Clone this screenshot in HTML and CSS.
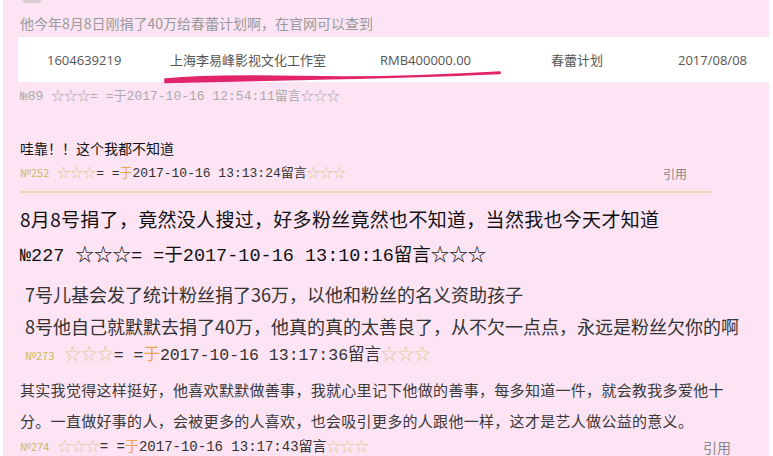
FILE: index.html
```html
<!DOCTYPE html>
<html lang="zh-CN">
<head>
  <meta charset="UTF-8" />
  <title>留言</title>
  <link rel="stylesheet" href="styles.css">
</head>
<body>

<div class="page">
  <!-- 上一条的头像，被截掉了 -->
  <div class="avatar-cut"></div>

  <p class="quote">他今年8月8日刚捐了40万给春蕾计划啊，在官网可以查到</p>

  <div class="donation">
    <span class="cell c-id">1604639219</span>
    <span class="cell c-name">上海李易峰影视文化工作室</span>
    <span class="cell c-amt">RMB400000.00</span>
    <span class="cell c-plan">春蕾计划</span>
    <span class="cell c-date">2017/08/08</span>
    <svg class="mark" width="773" height="50" viewBox="0 0 773 50">
      <path d="M165 44 Q 210 39.5 300 41.5 T 500 37 L 500 38.5 Q 420 42 300 44.5 T 165 47.5 Z" fill="#e2246a" stroke="#e2246a" stroke-width="1.5" stroke-linejoin="round"/>
    </svg>
  </div>

  <p class="meta meta-grey">№89 ☆☆☆= =于2017-10-16 12:54:11留言☆☆☆</p>

  <div class="reply">
    <p class="reply-text">哇靠！！这个我都不知道</p>
    <div class="meta-row">
      <p class="meta meta-13"><span class="no">№252</span> <span class="star">☆☆☆</span>= =<span class="yu">于</span>2017-10-16 13:13:24留言<span class="star">☆☆☆</span></p>
      <span class="quote-link">引用</span>
    </div>
    <div class="rule"></div>
  </div>

  <p class="big">8月8号捐了，竟然没人搜过，好多粉丝竟然也不知道，当然我也今天才知道</p>
  <p class="meta meta-18">№227 ☆☆☆= =于2017-10-16 13:10:16留言☆☆☆</p>

  <p class="mid first">7号儿基会发了统计粉丝捐了36万，以他和粉丝的名义资助孩子</p>
  <p class="mid second">8号他自己就默默去捐了40万，他真的真的太善良了，从不欠一点点，永远是粉丝欠你的啊</p>
  <p class="meta meta-16"><span class="no">№273</span> <span class="star">☆☆☆</span>= =<span class="yu">于</span>2017-10-16 13:17:36留言<span class="star">☆☆☆</span></p>

  <p class="small">其实我觉得这样挺好，他喜欢默默做善事，我就心里记下他做的善事，每多知道一件，就会教我多爱他十分。一直做好事的人，会被更多的人喜欢，也会吸引更多的人跟他一样，这才是艺人做公益的意义。</p>
  <div class="meta-row last">
    <p class="meta meta-14"><span class="no">№274</span> <span class="star">☆☆☆</span>= =<span class="yu">于</span>2017-10-16 13:17:43留言<span class="star">☆☆☆</span></p>
    <span class="quote-link">引用</span>
  </div>
</div>

</body>
</html>
```

FILE: styles.css
```css
/* 页面整体 */
body {
  margin: 0;
  background: #fff;
  font-family: "Noto Sans CJK SC", sans-serif;
}

.page {
  position: relative;
  margin: 0 4px 0 3px;
  height: 456px;
  overflow: hidden;
  background: #fce4f4;
}

p {
  margin: 0;
}

.avatar-cut {
  position: absolute;
  left: 20px;
  top: 0;
  width: 18px;
  height: 3px;
  border-radius: 0 0 6px 6px;
  background: #d6ccd2;
}

.quote {
  margin: 12px 0 0 17px;
  font-size: 14px;
  line-height: 22px;
  color: #9a9a9a;
}

/* 捐款记录那一行 */
.donation {
  position: relative;
  display: flex;
  align-items: center;
  margin: 3px 0 0 15px;
  height: 45px;
  background: #fff;
  font-family: "Open Sans", "Noto Sans CJK SC", sans-serif;
  font-size: 13px;
  color: #555;
}

.cell {
  white-space: nowrap;
}

.c-id { margin-left: 29px; width: 123px; }
.c-name { width: 210px; }
.c-amt { width: 171px; }
.c-plan { width: 127px; }

.mark {
  position: absolute;
  left: -18px;
  top: -2px;
}

/* 留言信息 */
.meta {
  font-family: "Liberation Mono", "Noto Sans CJK SC", monospace;
  white-space: nowrap;
  color: #333;
}

.meta-grey {
  margin: 5px 0 0 17px;
  font-size: 13px;
  line-height: 20px;
  color: #aaa;
}

.meta-13 { font-size: 13px; line-height: 20px; }
.meta-14 { font-size: 14px; line-height: 20px; }

.meta-18 {
  margin: 12px 0 0 17px;
  font-size: 18.5px;
  line-height: 26px;
  color: #111;
}

.meta-16 {
  margin: 4px 0 0 22px;
  font-size: 16.5px;
  line-height: 24px;
}

.no {
  font-family: "Noto Sans CJK SC", sans-serif;
  font-size: 11px;
  color: #cdb85c;
}

.star { color: #d9c98e; }
.yu { color: #eba24a; }

.reply {
  margin: 31px 0 0 17px;
  width: 692px;
}

.reply-text {
  font-size: 14px;
  line-height: 20px;
  color: #111;
}

.meta-row {
  display: flex;
  justify-content: space-between;
  align-items: center;
  margin-top: 4px;
}

.quote-link {
  margin-right: 25px;
  font-size: 12px;
  color: #888;
}

.rule {
  margin-top: 7px;
  height: 2px;
  background: #ecd6b8;
}

.big {
  margin: 13px 0 0 17px;
  font-size: 19px;
  letter-spacing: 0.3px;
  line-height: 26px;
  color: #111;
}

.mid {
  margin-left: 22px;
  font-size: 18px;
  line-height: 26px;
  color: #333;
}

.mid.first { margin-top: 11px; }
.mid.second { margin-top: 6px; }

.small {
  margin: 6px 0 0 17px;
  width: 710px;
  font-size: 15px;
  letter-spacing: 0.3px;
  line-height: 31px;
  color: #3a3a3a;
}

.meta-row.last {
  margin: 0 0 0 17px;
  width: 736px;
}

.meta-row.last .quote-link {
  margin-right: 25px;
  font-size: 14px;
}
```
